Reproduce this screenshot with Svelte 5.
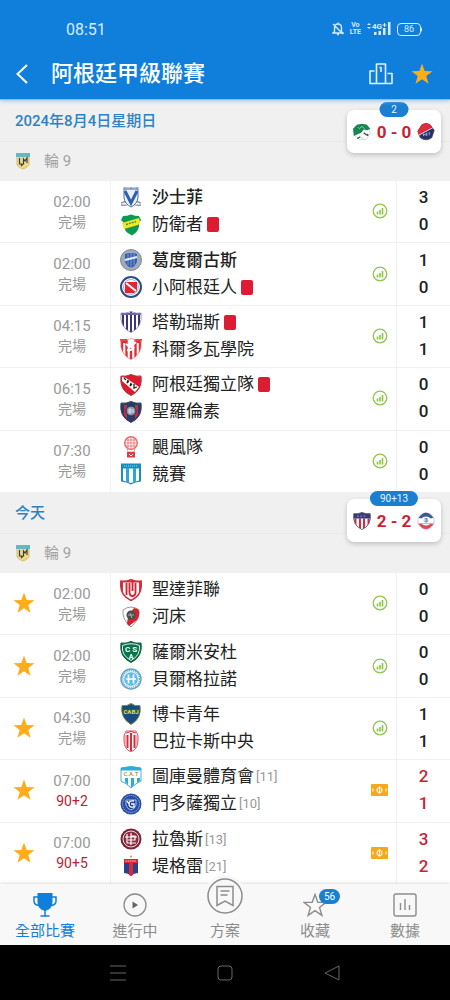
<script>
  const days = [
    {
      title: '2024年8月4日星期日',
      live: { minute: '2', home: 'cali', away: 'medellin', score: '0 - 0' },
      matches: [
        { time: '02:00', state: '完場', home: { name: '沙士菲', crest: 'velez', bold: true, score: 3 }, away: { name: '防衛者', crest: 'defensa', red: true, score: 0 } },
        { time: '02:00', state: '完場', home: { name: '葛度爾古斯', crest: 'godoy', bold: true, score: 1 }, away: { name: '小阿根廷人', crest: 'juniors', red: true, score: 0 } },
        { time: '04:15', state: '完場', home: { name: '塔勒瑞斯', crest: 'talleres', red: true, score: 1 }, away: { name: '科爾多瓦學院', crest: 'instituto', score: 1 } },
        { time: '06:15', state: '完場', home: { name: '阿根廷獨立隊', crest: 'indep', red: true, score: 0 }, away: { name: '聖羅倫素', crest: 'lorenzo', score: 0 } },
        { time: '07:30', state: '完場', home: { name: '颶風隊', crest: 'huracan', score: 0 }, away: { name: '競賽', crest: 'racing', score: 0 } }
      ]
    },
    {
      title: '今天',
      live: { minute: '90+13', home: 'junior', away: 'fortaleza', score: '2 - 2' },
      matches: [
        { fav: true, time: '02:00', state: '完場', home: { name: '聖達菲聯', crest: 'union', score: 0 }, away: { name: '河床', crest: 'river', score: 0 } },
        { fav: true, time: '02:00', state: '完場', home: { name: '薩爾米安杜', crest: 'sarmiento', score: 0 }, away: { name: '貝爾格拉諾', crest: 'belgrano', score: 0 } },
        { fav: true, time: '04:30', state: '完場', home: { name: '博卡青年', crest: 'boca', score: 1 }, away: { name: '巴拉卡斯中央', crest: 'barracas', score: 1 } },
        { fav: true, playing: true, time: '07:00', state: '90+2', home: { name: '圖庫曼體育會', crest: 'tucuman', rank: '[11]', score: 2 }, away: { name: '門多薩獨立', crest: 'rivadavia', rank: '[10]', score: 1 } },
        { fav: true, playing: true, time: '07:00', state: '90+5', home: { name: '拉魯斯', crest: 'lanus', rank: '[13]', score: 3 }, away: { name: '堤格雷', crest: 'tigre', rank: '[21]', score: 2 } }
      ]
    }
  ];

  const tabs = [
    { id: 'all', label: '全部比賽' },
    { id: 'live', label: '進行中' },
    { id: 'plan', label: '方案' },
    { id: 'fav', label: '收藏', badge: '56' },
    { id: 'data', label: '數據' }
  ];
  let active = $state('all');

  const shield = 'M1 2Q6 3 11 .500Q16 3 21 2Q23 16 11 21.500Q-1 16 1 2Z';
</script>

{#snippet star()}
  <svg class="star" viewBox="0 0 22 22" aria-hidden="true">
    <path fill="#fcad17" d="M11 .5l2.700 7.500 7.800.2-6.200 4.800 2.200 7.700L11 16.200l-6.500 4.500 2.200-7.700L.5 8.200l7.800-.2z" />
  </svg>
{/snippet}

{#snippet crest(key)}
  <svg class="crest" viewBox="0 0 22 22" aria-hidden="true">
    <defs><clipPath id={'clip-' + key}><path d={shield} /></clipPath></defs>
    {#if key === 'velez'}
      <path d="M1 16l6-2M21 16l-6-2M1 18q5 1 8-1M21 18q-5 1-8-1" stroke="#8f98a8" stroke-width="1.500" fill="none" />
      <path d="M4 2h14v9q-1 6-7 9-6-3-7-9z" fill="#eaf1fa" stroke="#4b6ea8" />
      <path d="M5 4l6 12 6-12" fill="none" stroke="#2f5fae" stroke-width="3" />
      <path d="M3 1h16M5 0v3M11 0v3M17 0v3" stroke="#7f93b5" />
    {:else if key === 'defensa'}
      <path d="M3 2q4 0 8-1.500 4 1.500 8 1.500l2 4-2 3q1 8-7 12.500Q3 18 4 9L1 6z" fill="#0d9a50" />
      <path d="M2 9l17-5 1 4-2 3-14 4z" fill="#f6e524" />
      <path d="M6 10.500l10-3" stroke="#2a9c4a" stroke-width="1.500" stroke-dasharray="2 1" />
    {:else if key === 'godoy'}
      <circle cx="11" cy="11" r="10.500" fill="#a2aab5" stroke="#808a98" />
      <path d="M5 5q6-2 12 0v7q-1 5-6 7-5-2-6-7z" fill="#325db1" />
      <path d="M8 5v11M11 4v15M14 5v11" stroke="#7c9ddb" />
      <path d="M5 11l12-3" stroke="#e7edf8" stroke-width="2" />
    {:else if key === 'juniors'}
      <circle cx="11" cy="11" r="10" fill="#fff" stroke="#2a4c88" stroke-width="2" />
      <circle cx="11" cy="11" r="7.500" fill="none" stroke="#9fb6d6" />
      <path d="M5 6h12v9l-3 2H5z" fill="#e32530" /><path d="M6 7l10 8" stroke="#fff" stroke-width="2" />
    {:else if key === 'talleres'}
      <g clip-path="url(#clip-talleres)"><path fill="#fff" d="M0 0h22v22H0z" /><path d="M3 0v22M7 0v22M11 0v22M15 0v22M19 0v22" stroke="#3c347e" stroke-width="2" /><path d="M1 3h20" stroke="#6b649e" stroke-width="2" /></g>
      <path d={shield} fill="none" stroke="#8c86b4" stroke-width=".8" />
    {:else if key === 'instituto'}
      <g clip-path="url(#clip-instituto)"><path fill="#fff" d="M0 0h22v22H0z" /><path d="M2 0v22M6.500 0v22M11 10v12M15.500 0v22M20 0v22" stroke="#e22e37" stroke-width="2.400" /></g>
      <path d="M0 1h7l-1 4H1zM15 1h7l-1 4h-5z" fill="#e22e37" />
      <path d="M6 6l4 3 6-5M7 12q5 1 7-3" fill="none" stroke="#fff" stroke-width="2" />
      <path d={shield} fill="none" stroke="#e6767c" stroke-width=".7" />
    {:else if key === 'indep'}
      <path d={shield} fill="#dc1c2c" stroke="#b4323a" /><path d="M2 3l4 1 13 9-4 5L2 7z" fill="#fff" />
      <path d="M4 4l2 2M8 6l-1 3 2-2M11 9l-1 3 2-2M14 10v4l3-1" stroke="#222" stroke-width="1.300" fill="none" />
    {:else if key === 'lorenzo'}
      <path d={shield} fill="#273c68" stroke="#49334a" /><path d="M4 4v10l3 4V4zM15 4v14l3-4V4z" fill="#c72b43" />
      <circle cx="11" cy="10" r="5" fill="#8794ab" stroke="#27304a" /><path d="M8 9h6M8 11h6M10 7v6" stroke="#dbe2ed" />
    {:else if key === 'huracan'}
      <circle cx="11" cy="7" r="6.300" fill="#fff" stroke="#e86a67" stroke-width="1.400" /><path d="M5 7h12M11 1v12M8 2v10M14 2v10M6 4h10M6 10h10" stroke="#e86a67" stroke-width=".8" />
      <path d="M7 12l1 4h6l1-4" fill="none" stroke="#e89999" /><path d="M7 16h8v5.500H7z" fill="#db3d40" /><path d="M9 18l2 2 2-2" stroke="#fff" fill="none" />
    {:else if key === 'racing'}
      <path d="M1 .5h20v18q-6 .5-10 3-4-2.500-10-3z" fill="#198dbb" /><path d="M3 5.500h16v12l-8 2.500-8-2.500z" fill="#fff" /><path d="M7.500 5v14M14.500 5v14" stroke="#2ba7da" stroke-width="3" /><path d="M4 3h14" stroke="#a8d9ec" stroke-dasharray="1 1" />
    {:else if key === 'union'}
      <g clip-path="url(#clip-union)"><path fill="#fff" d="M0 0h22v22H0z" /><path d="M2 0v22M20 0v22M6.500 4v12M9.500 4v9q0 4 3 4t3-4V4M12.500 0v12" stroke="#d52535" stroke-width="1.900" fill="none" /><path d="M0 2.500h22" stroke="#d52535" stroke-width="2" /></g>
      <path d={shield} fill="none" stroke="#cf2e3b" stroke-width="1.500" />
    {:else if key === 'river'}
      <path d="M3 4q8-6 16 0 1 10-8 17Q2 14 3 4z" fill="#fff" stroke="#9b9b9b" /><path d="M18 3q3 5-1 11L9 20l-2-2Q7 10 14 2z" fill="#d7212e" /><circle cx="11" cy="9" r="4.500" fill="#48504f" /><path d="M8 9h6M10 7l2 5" stroke="#aeb2ad" />
    {:else if key === 'sarmiento'}
      <path d={shield} fill="#08744a" stroke="#07563a" /><path d="M2.500 4.500Q11 1 19.500 4.500q1 10-8.500 15Q1 14 2.500 4.500z" fill="none" stroke="#d9f1e5" />
      <text x="11" y="11" font-size="8" font-weight="700" text-anchor="middle" fill="#fff">C S</text><text x="11" y="18" font-size="7" font-weight="700" text-anchor="middle" fill="#fff">A</text>
    {:else if key === 'belgrano'}
      <circle cx="11" cy="11" r="10" fill="#e8f5fc" stroke="#65a4c7" stroke-width="1.500" /><circle cx="11" cy="11" r="8.500" fill="none" stroke="#6faccd" stroke-dasharray="1 1" stroke-width="1.600" /><circle cx="11" cy="11" r="6.800" fill="#5bbde8" /><path d="M8.500 6.500v9M13.500 6.500v9M6 11h10" stroke="#fff" stroke-width="1.700" />
    {:else if key === 'boca'}
      <path d="M2 2.500q5 1 9-2 4 3 9 2 2 13-9 19Q0 15 2 2.500z" fill="#174c7d" stroke="#7c8c45" /><path d="M2.500 6h17v5h-17z" fill="#245b68" /><text x="11" y="11" font-size="6" font-weight="700" text-anchor="middle" fill="#f2d93c">CABJ</text>
    {:else if key === 'barracas'}
      <path d="M6 1h10q3 4 2 10 0 8-7 11-7-3-7-11Q3 5 6 1z" fill="#fff" stroke="#d45c65" /><path d="M7.500 5v13M11 3v18M14.500 5v13" stroke="#dc2a3a" stroke-width="2" /><path d="M6 3q5-3 10 0" stroke="#dc2a3a" fill="none" /><path d="M5 5v11M17 5v11" stroke="#e2747b" />
    {:else if key === 'tucuman'}
      <path d="M1 2q10-3 20 0v13q-5 2-10 7-5-5-10-7z" fill="#fff" stroke="#4caed6" /><path d="M5 12h3v7l-3-3zM11 12h3v7l-3 3zM17 12h3v3l-3 2zM1 2q10-3 20 0v2.500H1z" fill="#2eacd8" /><text x="11" y="10" font-size="6" font-weight="700" text-anchor="middle" fill="#b39f53">C.A.T</text>
    {:else if key === 'rivadavia'}
      <circle cx="11" cy="11" r="10.500" fill="#2a50a4" /><circle cx="11" cy="11" r="8.500" fill="none" stroke="#91a9db" stroke-dasharray="1.500 .7" /><path d="M6 7h10v5q-1 4-5 5-4-1-5-5z" fill="#1f4395" stroke="#a9bce6" /><path d="M14 8q-5-1-5 3t5 3v-3h-3M7 8l2 3" stroke="#fff" stroke-width="1.300" fill="none" />
    {:else if key === 'lanus'}
      <circle cx="11" cy="11" r="10.500" fill="#792536" /><circle cx="11" cy="11" r="8" fill="#8a2c3e" stroke="#f3dce1" /><path d="M7 6v9h9M5 9h12M11 5v12M8 12h7V8h-4" fill="none" stroke="#fff" stroke-width="1.200" />
    {:else if key === 'tigre'}
      <circle cx="11" cy="1.500" r="1" fill="#c58f5b" /><path d="M4 4h14v14q-4 0-7 3-3-3-7-3z" fill="#27418c" /><path d="M9 8h4v12l-2 1-2-1zM4 4h14v4H4z" fill="#df2637" /><path d="M5.500 6h11" stroke="#f6c5c9" stroke-dasharray="1.500 .7" />
    {:else if key === 'cali'}
      <path d="M2 6l4-4h10l4 4 1 7-5 7H8l-6-5z" fill="#fff" stroke="#c3d8ca" /><path d="M0 7l5-5 6-1 6 1 4 5-3 2-5-1-3 4-5 2-4 2z" fill="#178752" /><path d="M6 5l2 2 3-3 3 3M10 17l3 3M15 12l3 4" stroke="#b4d9c5" fill="none" /><path d="M13 12l4 3M5 19l4-2M18 13v3" stroke="#474c49" stroke-width="1.500" />
    {:else if key === 'medellin'}
      <path d="M6 2q5-3 10 0l5 7-3 9q-7 5-14 0L1 10z" fill="#21336f" stroke="#7a3041" /><path d="M6 2q5-3 10 0l2 4-16 9-1-5z" fill="#e22b3b" /><path d="M2 15L19 6" stroke="#fff" /><path d="M8 16v-3l2 2 2-3v4M15 11v4" stroke="#b9c1df" fill="none" />
    {:else if key === 'junior'}
      <g clip-path="url(#clip-junior)"><path fill="#fff" d="M0 0h22v22H0z" /><path d="M3 8v14M8.500 8v14M13.500 8v14M19 8v14" stroke="#d52a45" stroke-width="2.500" /><path d="M0 0h22v8H0z" fill="#343c78" /></g>
      <path d={shield} fill="none" stroke="#534570" /><path d="M5 5h12" stroke="#b1b6dd" stroke-dasharray="2 2" />
    {:else if key === 'fortaleza'}
      <circle cx="11" cy="11" r="10" fill="#fff" stroke="#bdc7d8" /><path d="M2 7q9-12 18 0l-3 1q-6-5-12 0z" fill="#3e5795" /><path d="M2 15q9 12 18 0l-3-1q-6 5-12 0z" fill="#d84c59" /><circle cx="11" cy="10" r="3" fill="#b8cee5" /><path d="M10 8h2v4h-2" stroke="#57759e" fill="none" /><path d="M1 14h20" stroke="#9db3ca" />
    {/if}
  </svg>
{/snippet}

{#snippet league()}
  <svg class="league" viewBox="0 0 14 18" aria-hidden="true">
    <path d="M1 3h12v10q-2 3-6 4-4-1-6-4z" fill="#efd983" stroke="#d8bd79" />
    <path d="M0 1h14v4H0z" fill="#64b9bd" />
    <path d="M3.500 6v6H6M7.500 12.500V7l1.500 2 2-3v5M5 14l3-3" fill="none" stroke="#383f46" stroke-width="1.200" />
  </svg>
{/snippet}

{#snippet team(side)}
  <div class="team">
    {@render crest(side.crest)}
    <span class="name" class:bold={side.bold}>{side.name}</span>
    {#if side.rank}<small>{side.rank}</small>{/if}
    {#if side.red}<i class="redcard"></i>{/if}
  </div>
{/snippet}

<div class="app">
  <header>
    <div class="status">
      <span class="clock">08:51</span>
      <svg class="bell" viewBox="0 0 12 14" fill="none" stroke="#d5ebff" stroke-width="1.400" aria-hidden="true">
        <path d="M2.500 10V6q0-4 3.500-4t3.500 4v4l1.500 1H1zM5 12.500h2M6 .5V2M1 2l10 10" />
      </svg>
      <span class="volte"><b>Vo</b><b>LTE</b></span>
      <svg class="signal" viewBox="0 0 24 14" aria-hidden="true">
        <path d="M0 3l2-2 2 2zM0 5l2 2 2-2z" fill="#d5ebff" />
        <text x="5" y="7" font-size="8" font-weight="700" fill="#d5ebff">4G</text>
        <path d="M17.500 1v4M15.500 3h4" stroke="#d5ebff" />
        <path d="M7 10h2.500v3H7zM11.500 9H14v4h-2.500zM16 6h2.500v7H16zM21 0h2.500v13H21z" fill="#d5ebff" />
      </svg>
      <span class="battery">86</span>
    </div>
    <div class="bar">
      <button class="back" aria-label="返回">
        <svg viewBox="0 0 12 20" fill="none" stroke="#fff" stroke-width="2" aria-hidden="true"><path d="M11 1L1.500 10 11 19" /></svg>
      </button>
      <h1>阿根廷甲級聯賽</h1>
      <button class="podium" aria-label="排名">
        <svg viewBox="0 0 24 22" fill="none" stroke="#e3f1ff" stroke-width="1.600" stroke-linejoin="round" aria-hidden="true">
          <path d="M7.500 20.500V1h9v19.500M5.500 8H1v12.500h22V10.500h-4.500M10.500 4.500H12V9" />
        </svg>
      </button>
      <button aria-label="收藏聯賽">{@render star()}</button>
    </div>
  </header>

  <main>
    {#each days as day, i}
      <section class:first={i === 0}>
        <h2>{day.title}</h2>
        <div class="round">{@render league()}<span>輪 9</span></div>
        <a class="live" href="#live">
          <span class="minute">{day.live.minute}</span>
          {@render crest(day.live.home)}
          <b>{day.live.score}</b>
          {@render crest(day.live.away)}
        </a>
        <ul>
          {#each day.matches as m}
            <li class:playing={m.playing}>
              <div class="when">
                <span class="fav">
                  {#if m.fav}<button aria-label="取消收藏">{@render star()}</button>{/if}
                </span>
                <span class="times"><time>{m.time}</time><span class="state">{m.state}</span></span>
              </div>
              <div class="teams">
                <div>{@render team(m.home)}{@render team(m.away)}</div>
                {#if m.playing}
                  <svg class="mark" viewBox="0 0 18 14" aria-hidden="true">
                    <rect x="1" y="1" width="17" height="12" rx="1" fill="#f6a81c" />
                    <circle cx="9.500" cy="7" r="2.500" fill="none" stroke="#fff3d5" stroke-width="1.200" />
                    <path d="M9.500 3v8M3 5.500v3M16 5.500v3" stroke="#fff3d5" stroke-width="1.200" />
                  </svg>
                {:else}
                  <svg class="mark" viewBox="0 0 16 16" aria-hidden="true">
                    <circle cx="8" cy="8" r="6.800" fill="none" stroke="#93c450" stroke-width="1.300" />
                    <path d="M5.500 8.500v3M8 7v4.500M10.500 5v6.500" stroke="#8ac63c" stroke-width="1.600" />
                  </svg>
                {/if}
              </div>
              <div class="score"><span>{m.home.score}</span><span>{m.away.score}</span></div>
            </li>
          {/each}
        </ul>
      </section>
    {/each}
  </main>

  <nav>
    {#each tabs as tab}
      <button class="tab" class:active={active === tab.id} class:raised={tab.id === 'plan'} onclick={() => (active = tab.id)}>
        <span class="icon">
          {#if tab.id === 'all'}
            <svg viewBox="0 0 24 24" fill="none" stroke="currentColor" stroke-width="1.500" aria-hidden="true">
              <path d="M4.500 0h15v9q0 7-7.500 9-7.500-2-7.500-9z" fill="currentColor" stroke="none" />
              <path d="M5 4H1v4q0 4 5 4.500M19 4h4v4q0 4-5 4.500M12 17v5.500M7.500 23h9" />
            </svg>
          {:else if tab.id === 'live'}
            <svg viewBox="0 0 24 24" aria-hidden="true"><circle cx="12" cy="12" r="11" fill="none" stroke="currentColor" stroke-width="1.300" /><path d="M9.500 8.500v7l5.500-3.500z" fill="#666" /></svg>
          {:else if tab.id === 'plan'}
            <svg viewBox="0 0 36 36" fill="none" stroke="currentColor" stroke-width="1.500" aria-hidden="true"><circle cx="18" cy="18" r="17" /><path d="M10 8.500h16v19l-8-4.500-8 4.500zM13.500 13h9M13.500 17h7" /></svg>
          {:else if tab.id === 'fav'}
            <svg viewBox="0 0 24 24" fill="none" stroke="currentColor" stroke-width="1.400" aria-hidden="true"><path d="M12 1.500l2.800 7.700 8.200.2-6.500 5 2.400 8-6.900-4.700-6.900 4.700 2.400-8-6.500-5 8.200-.2z" /></svg>
          {:else}
            <svg viewBox="0 0 24 24" fill="none" stroke="currentColor" stroke-width="1.400" aria-hidden="true"><rect x="1" y="1" width="22" height="22" rx="2" /><path d="M7.500 10v7M12 6v11M16.500 12v5" /></svg>
          {/if}
          {#if tab.badge}<span class="badge">{tab.badge}</span>{/if}
        </span>
        <span>{tab.label}</span>
      </button>
    {/each}
  </nav>

  <footer>
    <button aria-label="最近"><svg viewBox="0 0 16 16" aria-hidden="true"><path d="M0 1h16M0 8h16M0 15h16" /></svg></button>
    <button aria-label="主頁"><svg viewBox="0 0 16 16" aria-hidden="true"><rect x="1" y="1" width="14" height="14" rx="3" /></svg></button>
    <button aria-label="上一頁"><svg viewBox="0 0 16 16" aria-hidden="true"><path d="M1 8L15 1v14z" stroke-linejoin="round" /></svg></button>
  </footer>
</div>

<style>
  :global(body) { margin: 0; background: #fff; }
  .app {
    min-height: 100vh;
    display: flex;
    flex-direction: column;
    font-family: Roboto, "Noto Sans CJK TC", sans-serif;
    color: #222;
  }
  button {
    border: 0;
    padding: 0;
    background: none;
    font: inherit;
    color: inherit;
    cursor: pointer;
  }
  svg { display: block; }

  header {
    position: relative;
    z-index: 1;
    background: #107fdc;
    border-bottom: 1px solid #8dbce8;
    box-shadow: 0 1px 4px #9fc4e8;
    color: #fff;
  }
  .status {
    display: flex;
    align-items: center;
    gap: 6px;
    height: 38px;
    padding: 10px 29px 0 66px;
    font-size: 16px;
  }
  .clock { flex: 1; color: #d9edff; }
  .bell { width: 12px; height: 14px; }
  .volte {
    display: grid;
    font-size: 7px;
    line-height: 7px;
    text-align: center;
    color: #d5ebff;
  }
  .signal { width: 24px; height: 14px; }
  .battery {
    position: relative;
    width: 22px;
    border: 1px solid #d5ebff;
    border-radius: 4px;
    font-size: 9px;
    line-height: 11px;
    text-align: center;
    color: #d5ebff;
  }
  .battery::after {
    content: "";
    position: absolute;
    left: 100%;
    top: 3px;
    width: 2px;
    height: 5px;
    background: #d5ebff;
    border-radius: 0 2px 2px 0;
  }
  .bar {
    display: flex;
    align-items: center;
    height: 51px;
    padding: 0 17px 0 16px;
  }
  .back { width: 35px; }
  .back svg { width: 12px; height: 20px; }
  h1 { flex: 1; margin: 0; font-size: 22px; line-height: 32px; font-weight: 500; }
  .podium { margin-right: 18px; }
  .podium svg { width: 24px; height: 22px; }
  .star { width: 22px; height: 22px; }

  main { flex: 1; }
  section { position: relative; background: #f0f0f0; }
  h2 {
    margin: 0;
    padding: 2px 15px 0;
    font-size: 15px;
    line-height: 39px;
    font-weight: 500;
    color: #2d82c5;
    border-bottom: 1px solid #e9e9e9;
  }
  .round {
    display: flex;
    align-items: center;
    gap: 14px;
    padding: 0 16px;
    font-size: 15px;
    line-height: 38px;
    color: #a2a2a2;
  }
  .league { width: 14px; height: 18px; }
  .live {
    position: absolute;
    right: 9px;
    top: 7px;
    width: 82px;
    height: 43px;
    padding: 0 6px;
    display: flex;
    align-items: center;
    justify-content: space-between;
    border-radius: 7px;
    background: #fff;
    box-shadow: 0 2px 5px #0003;
    color: #c91f35;
    font-size: 17px;
    text-decoration: none;
    white-space: nowrap;
  }
  .first .live { top: 10px; }
  .live .crest { width: 18px; height: 18px; }
  .minute {
    position: absolute;
    left: 50%;
    top: -8px;
    transform: translateX(-50%);
    padding: 0 10px;
    min-width: 9px;
    border-radius: 8px;
    background: #1b7fd1;
    color: #e5f3ff;
    font-size: 10px;
    line-height: 15px;
    text-align: center;
  }

  ul {
    margin: 0;
    padding: 0;
    list-style: none;
    min-height: 312px;
    display: grid;
    grid-auto-rows: 1fr;
    background: #fff;
  }
  li {
    display: grid;
    grid-template-columns: 111px 1fr 53px;
    box-shadow: inset 0 1px #f1f1f1;
  }
  .when { display: grid; grid-template-columns: 48px 48px; align-items: center; border-right: 1px solid #efefef; }
  .fav { display: grid; justify-items: center; }
  .times {
    display: grid;
    justify-items: center;
    padding-top: 1px;
    font-size: 15px;
    line-height: 20px;
    color: #999;
  }
  .state { font-size: 14px; }
  .playing .state { color: #bd2036; }
  .teams {
    display: flex;
    align-items: center;
    justify-content: space-between;
    padding: 0 8px 0 9px;
    border-right: 1px solid #f2f2f2;
  }
  .team { display: flex; align-items: center; height: 27px; white-space: nowrap; }
  .crest { width: 22px; height: 22px; flex: none; }
  .name { margin-left: 10px; font-size: 17px; line-height: 27px; }
  .bold { font-weight: 500; }
  small { margin-left: 2px; font-size: 13px; color: #999; }
  .redcard { width: 12px; height: 15px; margin-left: 4px; border-radius: 2px; background: #dd1c34; }
  .mark { width: 16px; height: 16px; }
  .playing .mark { width: 18px; height: 14px; }
  .score {
    display: grid;
    align-content: center;
    text-align: center;
    font-size: 17px;
    line-height: 27px;
    font-weight: 500;
  }
  .playing .score { color: #cc2236; }

  nav {
    display: grid;
    grid-template-columns: repeat(5, 1fr);
    height: 61px;
    background: #f8f8f8;
    box-shadow: 0 -1px 3px #0002;
    position: relative;
  }
  .tab {
    display: flex;
    flex-direction: column;
    align-items: center;
    justify-content: flex-end;
    gap: 4px;
    height: 61px;
    padding-bottom: 3px;
    font-size: 15px;
    line-height: 21px;
    color: #8c8c8c;
  }
  .active { color: #107fdc; }
  .icon { position: relative; }
  .icon svg { width: 24px; height: 24px; }
  .raised .icon { padding: 3px; border-radius: 50%; background: #f8f8f8; }
  .raised .icon svg { width: 36px; height: 36px; }
  .badge {
    position: absolute;
    left: 16px;
    top: -4px;
    width: 21px;
    border-radius: 8px;
    background: #1b7fd1;
    color: #fff;
    font-size: 10px;
    line-height: 15px;
  }

  footer {
    display: grid;
    grid-template-columns: repeat(3, 1fr);
    justify-items: center;
    align-items: center;
    height: 55px;
    padding: 0 64px;
    background: #000;
  }
  footer svg { width: 16px; height: 16px; fill: none; stroke: #666; stroke-width: 1; }
</style>
